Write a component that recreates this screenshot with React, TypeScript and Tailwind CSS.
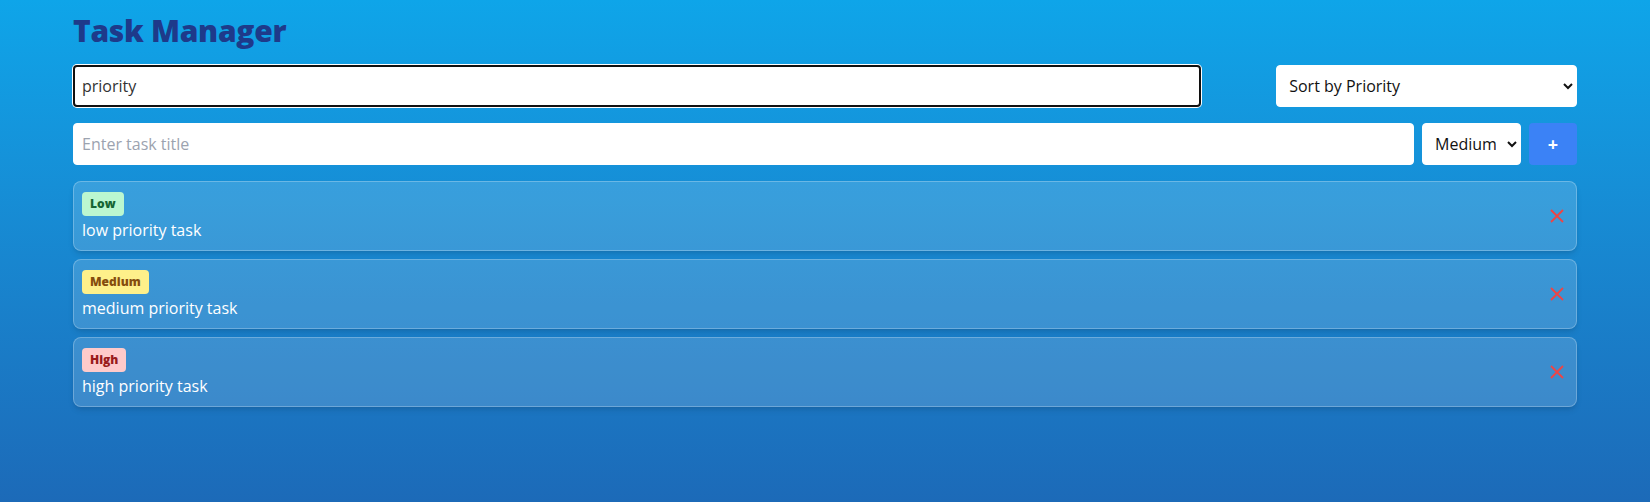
import { useState } from 'react';

type Priority = 'low' | 'medium' | 'high';

const badgeStyles: Record<Priority, { label: string; cls: string }> = {
  low: { label: 'Low', cls: 'bg-[#bbf7d0] text-[#166534]' },
  medium: { label: 'Medium', cls: 'bg-[#fef08a] text-[#854d0e]' },
  high: { label: 'High', cls: 'bg-[#fecaca] text-[#991b1b]' },
};

const initialTasks = [
  { id: 1, title: 'low priority task', priority: 'low' as Priority },
  { id: 2, title: 'medium priority task', priority: 'medium' as Priority },
  { id: 3, title: 'high priority task', priority: 'high' as Priority },
];

export default function App() {
  const [tasks, setTasks] = useState(initialTasks);
  const [search, setSearch] = useState('priority');
  const [title, setTitle] = useState('');
  const [priority, setPriority] = useState<Priority>('medium');

  return (
    <div className="min-h-screen bg-gradient-to-b from-[#0ea5e9] to-[#1c6ab8] font-['Open_Sans','Noto_Sans',sans-serif]">
      <div className="container mx-auto px-4 pt-[13px]">
        <h1 className="text-3xl font-extrabold text-[#1e3a8a] mb-4 tracking-[-0.3px]">Task Manager</h1>

        <div className="flex justify-between items-center mb-4">
          <input
            value={search}
            onChange={(e) => setSearch(e.target.value)}
            className="w-3/4 p-2 bg-white border border-white rounded text-base text-[#333] outline-2 -outline-offset-2 outline-[#101010] ring-1 ring-white"
          />
          <select className="w-1/5 p-2 bg-white border border-white rounded text-base text-[#111]">
            <option>Sort by Priority</option>
            <option>Sort by Title</option>
          </select>
        </div>

        <div className="flex gap-2 mb-4">
          <input
            value={title}
            onChange={(e) => setTitle(e.target.value)}
            placeholder="Enter task title"
            className="flex-1 p-2 bg-white border border-white rounded text-base text-[#333] placeholder:text-[#9ca3af] outline-none"
          />
          <select
            value={priority}
            onChange={(e) => setPriority(e.target.value as Priority)}
            className="w-[99px] p-2 bg-white border border-white rounded text-base text-[#111]"
          >
            <option value="low">Low</option>
            <option value="medium">Medium</option>
            <option value="high">High</option>
          </select>
          <button className="w-12 bg-[#3b82f6] text-white font-bold text-lg rounded">+</button>
        </div>

        <div className="flex flex-col gap-2">
          {tasks.map((task) => {
            const badge = badgeStyles[task.priority];
            return (
              <div
                key={task.id}
                className="flex items-center justify-between p-2 bg-white/15 border border-white/25 rounded-lg shadow-md"
              >
                <div>
                  <span className={`inline-block px-2 py-1 rounded text-xs font-extrabold leading-4 ${badge.cls}`}>
                    {badge.label}
                  </span>
                  <p className="mt-[2px] text-base text-white">{task.title}</p>
                </div>
                <button
                  onClick={() => setTasks(tasks.filter((t) => t.id !== task.id))}
                  className="p-1 text-[#ef4444]"
                >
                  <svg width="14" height="14" viewBox="0 0 14 14" fill="none" stroke="currentColor" strokeWidth="1.8">
                    <path d="M1 1l12 12M13 1L1 13" />
                  </svg>
                </button>
              </div>
            );
          })}
        </div>
      </div>
    </div>
  );
}
